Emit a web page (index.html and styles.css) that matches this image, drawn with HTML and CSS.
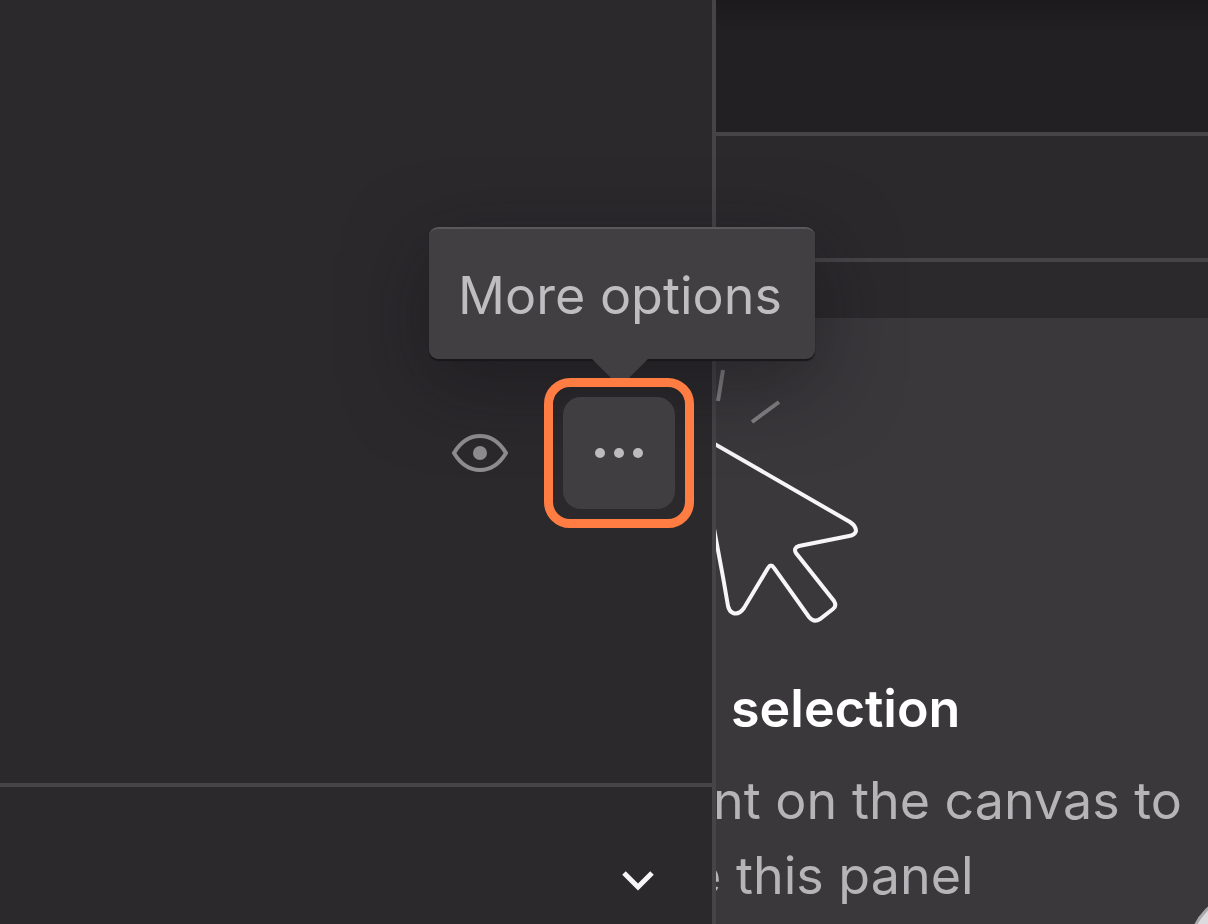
FILE: index.html
```html
<!DOCTYPE html>
<html lang="en">
<head>
<meta charset="utf-8">
<meta name="viewport" content="width=device-width, initial-scale=1">
<title>Layers panel</title>
<link rel="stylesheet" href="styles.css">
</head>
<body>
<div class="editor">
  <aside class="layers">
    <div class="layer-row">
      <button class="icon-button" type="button" aria-label="Toggle visibility">
        <svg class="eye" viewBox="0 0 58 40" aria-hidden="true">
          <path d="M4 20C10 10 18 3 30 3S50 10 56 20C50 30 41 37 30 37S10 30 4 20Z"/>
          <circle cx="30" cy="20" r="7"/>
        </svg>
      </button>
      <div class="more">
        <div class="tooltip" role="tooltip" id="more-tip">More options</div>
        <div class="ring">
          <button class="more-button" type="button" aria-labelledby="more-tip">
            <svg class="dots" viewBox="0 0 48 12" aria-hidden="true">
              <circle cx="5" cy="6" r="5"/><circle cx="24" cy="6" r="5"/><circle cx="43" cy="6" r="5"/>
            </svg>
          </button>
        </div>
      </div>
    </div>
    <div class="section">
      <button class="icon-button" type="button" aria-label="Expand section">
        <svg class="chevron" viewBox="0 0 34 22" aria-hidden="true"><path d="M3 4 17 18 31 4"/></svg>
      </button>
    </div>
  </aside>
  <main class="inspector">
    <div class="topbar"></div>
    <div class="tabs"></div>
    <section class="empty">
      <svg class="pointer" viewBox="0 0 144 260" aria-hidden="true">
        <path class="ray" d="M7 2 2 33M36 54 63 34"/>
        <path class="arrow" d="M-10 71 134 154Q140 158 140 163Q139 167 133 168L83 178Q77 180 80 185L118 233Q121 238 117 241L104 251Q98 255 93 249L58 200Q55 195 52 200L28 240Q23 247 17 245Q13 243 12 238L7 209-4 150"/>
      </svg>
      <h2 class="title">selection</h2>
      <p class="hint">nt on the canvas to</p>
      <p class="hint hint-end">e this panel</p>
      <button class="help" type="button" aria-label="Help"></button>
    </section>
  </main>
</div>
</body>
</html>
```
FILE: styles.css
```css
* {
  box-sizing: border-box;
}

body {
  margin: 0;
  background: #2b292c;
  font-family: Inter, "Liberation Sans", sans-serif;
}

button {
  display: grid;
  place-items: center;
  padding: 0;
  border: 0;
  background: none;
}

svg {
  display: block;
  fill: none;
}

.editor {
  display: grid;
  grid-template-columns: 716fr 492fr;
  min-height: 100vh;
}

.layers {
  display: flex;
  flex-direction: column;
  min-width: 0;
  border-right: 4px solid #464447;
}

.layer-row {
  display: flex;
  flex: 1;
  align-items: flex-start;
  justify-content: flex-end;
  gap: 36px;
  padding: 378px 18px 0 0;
}

.icon-button {
  height: 150px;
}

.eye {
  width: 58px;
  height: 40px;
  stroke: #8f8d90;
  stroke-width: 4;
}

.eye circle {
  fill: #8f8d90;
  stroke: none;
}

.more {
  position: relative;
  z-index: 2;
}

.ring {
  padding: 10px;
  border: 9px solid #ff7c43;
  border-radius: 26px;
}

.more-button {
  width: 112px;
  height: 112px;
  border-radius: 18px;
  background: #403e41;
}

.dots {
  width: 48px;
  height: 12px;
  fill: #bdbbbe;
}

.tooltip {
  position: absolute;
  z-index: -1;
  bottom: calc(100% + 19px);
  left: 50%;
  width: 386px;
  margin-left: -190px;
  padding: 36px 4px 32px 0;
  border-top: 2px solid #5a585b;
  border-radius: 9px;
  background: #423f43;
  box-shadow: 0 2px 1px #19171a, 0 24px 80px rgb(20 18 21 / 50%);
  color: #bfbdc0;
  font-size: 52px;
  line-height: 62px;
  text-align: center;
  white-space: nowrap;
}

.tooltip::after {
  content: "";
  position: absolute;
  top: 100%;
  left: 163px;
  border: 28px solid transparent;
  border-top-color: #423f43;
}

.section {
  display: flex;
  justify-content: flex-end;
  padding: 18px 57px 0 0;
  height: 141px;
  border-top: 4px solid #464447;
}

.chevron {
  width: 34px;
  height: 22px;
  stroke: #f7f5f8;
  stroke-width: 5;
}

.inspector {
  display: flex;
  flex-direction: column;
  min-width: 0;
}

.topbar {
  height: 136px;
  border-bottom: 4px solid #464447;
  background: linear-gradient(#1c1a1d, #222023 32px);
}

.tabs {
  height: 126px;
  border-bottom: 4px solid #464447;
}

.empty {
  position: relative;
  flex: 1;
  margin-top: 56px;
  padding-top: 50px;
  overflow: hidden;
  background: #3a383b;
  white-space: nowrap;
}

.pointer {
  width: 144px;
  height: 260px;
  stroke: #f7f5f8;
  stroke-width: 4;
}

.ray {
  stroke: #858386;
}

.title,
.hint {
  margin: 0;
  font-size: 52px;
}

.title {
  padding: 50px 0 23px 15px;
  color: #fff;
  font-weight: 600;
  line-height: 62px;
}

.hint {
  margin-left: -3px;
  color: #b6b4b7;
  line-height: 75px;
}

.hint-end {
  margin-left: -25px;
}

.help {
  position: absolute;
  right: -82px;
  bottom: -71px;
  width: 100px;
  height: 100px;
  border: 3px solid #aaa8ab;
  border-radius: 50%;
  background: #dddbde;
}
```
